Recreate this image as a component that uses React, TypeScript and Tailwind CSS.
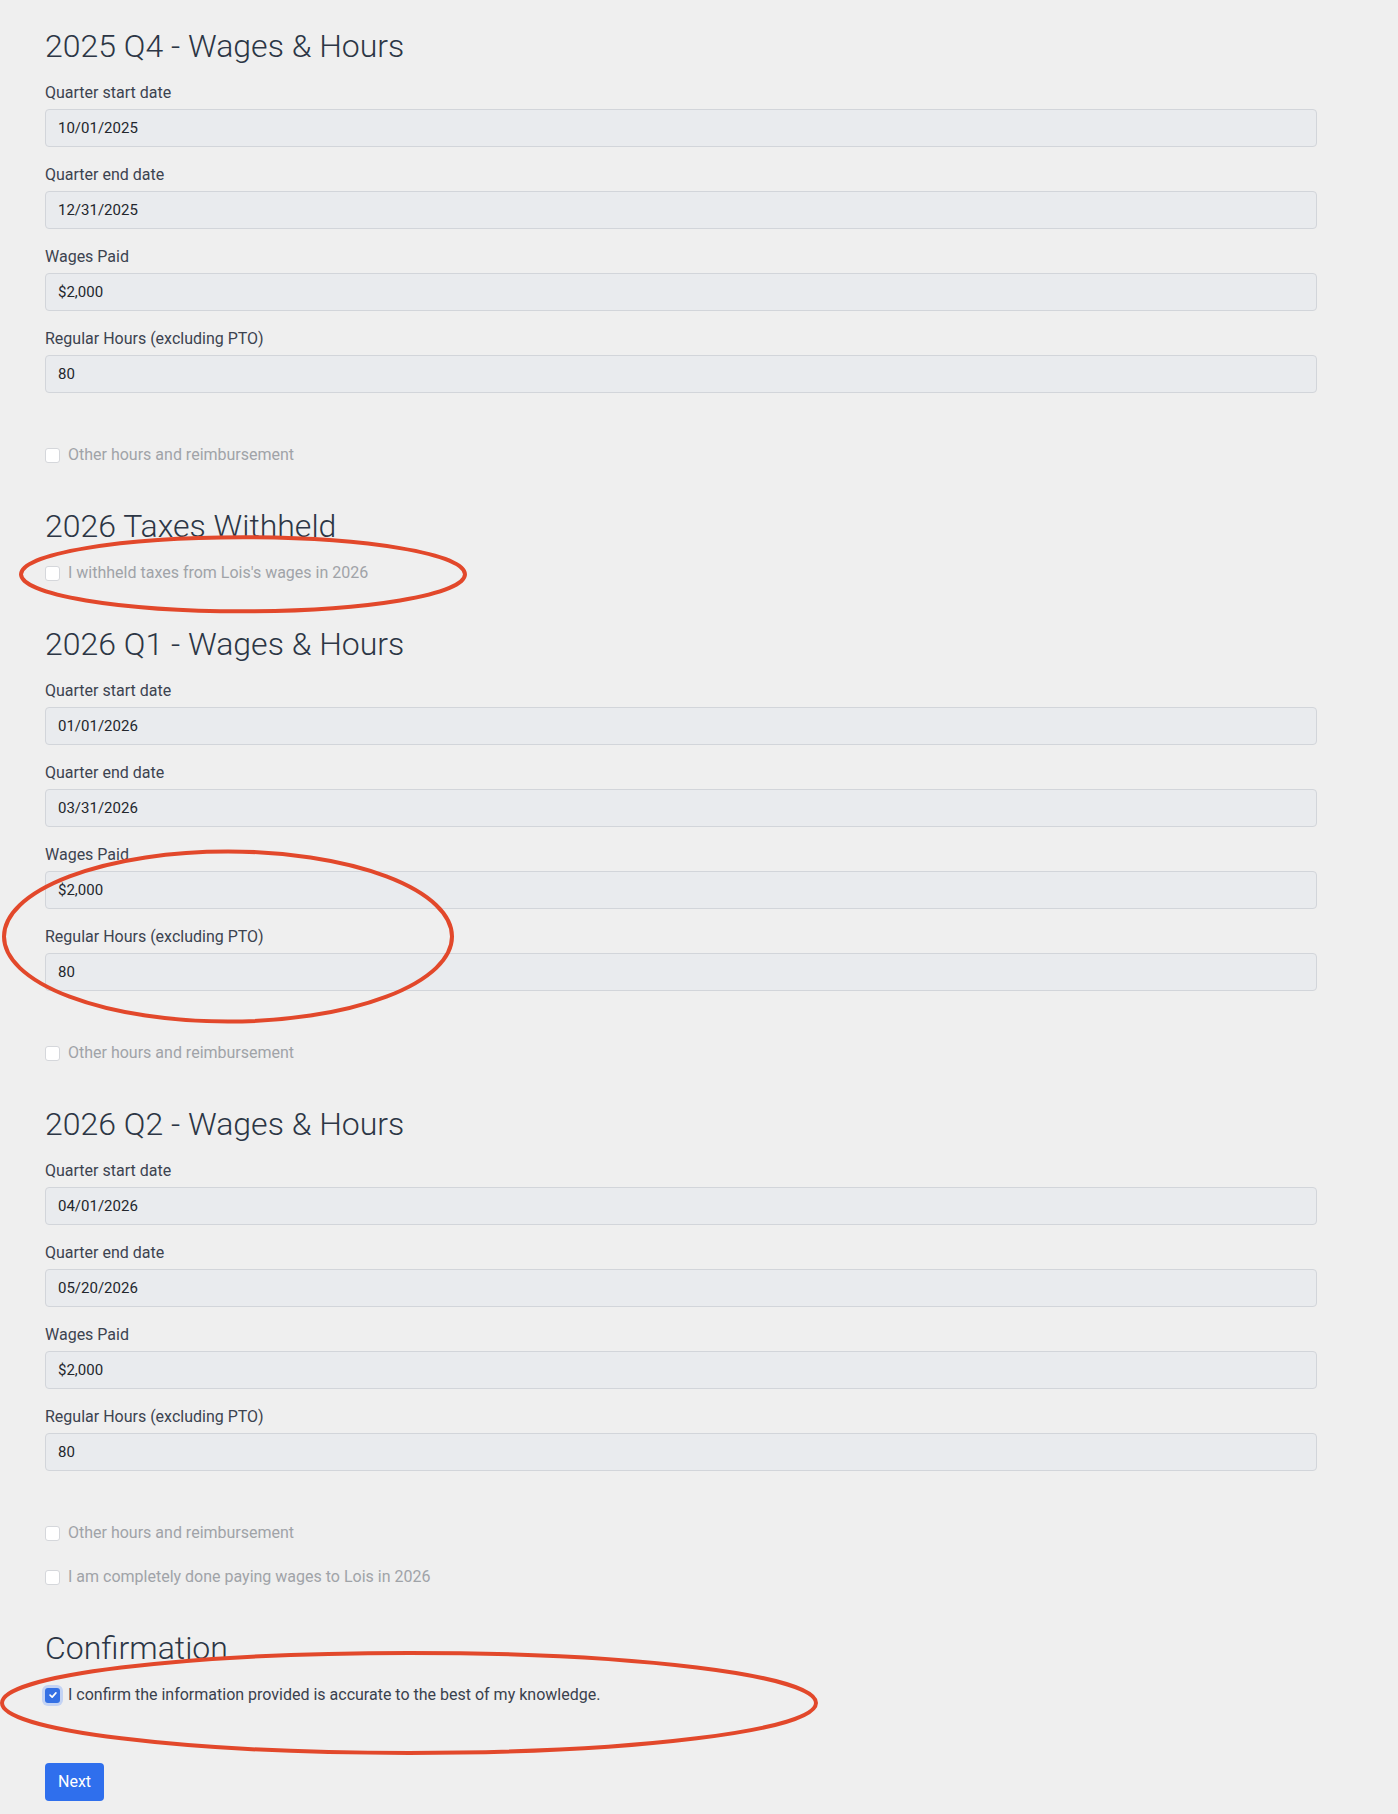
import React from "react";

type Quarter = {
  title: string;
  start: string;
  end: string;
  wages: string;
  hours: string;
  done?: boolean;
};

const quarters: Record<string, Quarter> = {
  q4: { title: "2025 Q4 - Wages & Hours", start: "10/01/2025", end: "12/31/2025", wages: "$2,000", hours: "80" },
  q1: { title: "2026 Q1 - Wages & Hours", start: "01/01/2026", end: "03/31/2026", wages: "$2,000", hours: "80" },
  q2: { title: "2026 Q2 - Wages & Hours", start: "04/01/2026", end: "05/20/2026", wages: "$2,000", hours: "80", done: true },
};

const Heading = ({ children }: { children: React.ReactNode }) => (
  <h2 className="text-[32px] leading-[38px] font-light text-[#2c3645] mb-4">{children}</h2>
);

const Field = ({ label, value }: { label: string; value: string }) => (
  <div className="flex flex-col gap-1">
    <label className="text-[16px] leading-6 text-[#3c4350]">{label}</label>
    <input
      readOnly
      value={value}
      className="block w-full h-[38px] rounded-[4px] border border-[#d2d5da] bg-[#e9ebee] px-3 text-[15px] text-[#23272d] outline-none"
    />
  </div>
);

const Check = ({ label, checked = false }: { label: string; checked?: boolean }) => (
  <div className="flex items-center h-6 gap-2">
    {checked ? (
      <span className="flex items-center justify-center w-[15px] h-[15px] rounded-[3px] bg-[#3470e4] ring-[3px] ring-[#c3d3f4]">
        <svg viewBox="0 0 12 12" className="w-[10px] h-[10px]" fill="none" stroke="white" strokeWidth="2" strokeLinecap="round" strokeLinejoin="round">
          <path d="M2.5 6.2 L5 8.5 L9.5 3.5" />
        </svg>
      </span>
    ) : (
      <span className="w-[15px] h-[15px] rounded-[3px] border border-[#d5d7db] bg-white" />
    )}
    <span className={checked ? "text-[16px] text-[#3a414d]" : "text-[16px] text-[#a0a3a8]"}>{label}</span>
  </div>
);

const QuarterSection = ({ q }: { q: Quarter }) => (
  <section>
    <Heading>{q.title}</Heading>
    <div className="flex flex-col gap-4">
      <Field label="Quarter start date" value={q.start} />
      <Field label="Quarter end date" value={q.end} />
      <Field label="Wages Paid" value={q.wages} />
      <Field label="Regular Hours (excluding PTO)" value={q.hours} />
    </div>
    <div className="mt-[50px] flex flex-col gap-5">
      <Check label="Other hours and reimbursement" />
      {q.done && <Check label="I am completely done paying wages to Lois in 2026" />}
    </div>
  </section>
);

const App = () => {
  return (
    <div className="relative min-h-[1814px] bg-[#efefef]" style={{ fontFamily: "Roboto, 'Noto Sans', sans-serif" }}>
      <main className="pl-[45px] pr-[81px] pt-[27px] pb-[14px] flex flex-col gap-10">
        <QuarterSection q={quarters.q4} />

        <section>
          <Heading>2026 Taxes Withheld</Heading>
          <Check label="I withheld taxes from Lois's wages in 2026" />
        </section>

        <QuarterSection q={quarters.q1} />
        <QuarterSection q={quarters.q2} />

        <section>
          <Heading>Confirmation</Heading>
          <Check label="I confirm the information provided is accurate to the best of my knowledge." checked />
          <button className="mt-14 h-[38px] px-[13px] rounded-[4px] bg-[#2f6fed] text-white text-[16px]">Next</button>
        </section>
      </main>

      {/* hand-drawn annotation rings over the form */}
      <svg className="absolute inset-0 w-full h-full pointer-events-none" viewBox="0 0 1398 1814" preserveAspectRatio="none">
        <g fill="none" stroke="#e2482b" strokeWidth="4">
          <ellipse cx="243" cy="574" rx="222" ry="37" />
          <ellipse cx="228" cy="936" rx="224" ry="85" />
          <ellipse cx="409" cy="1702" rx="407" ry="50" />
        </g>
      </svg>
    </div>
  );
};

export default App;
